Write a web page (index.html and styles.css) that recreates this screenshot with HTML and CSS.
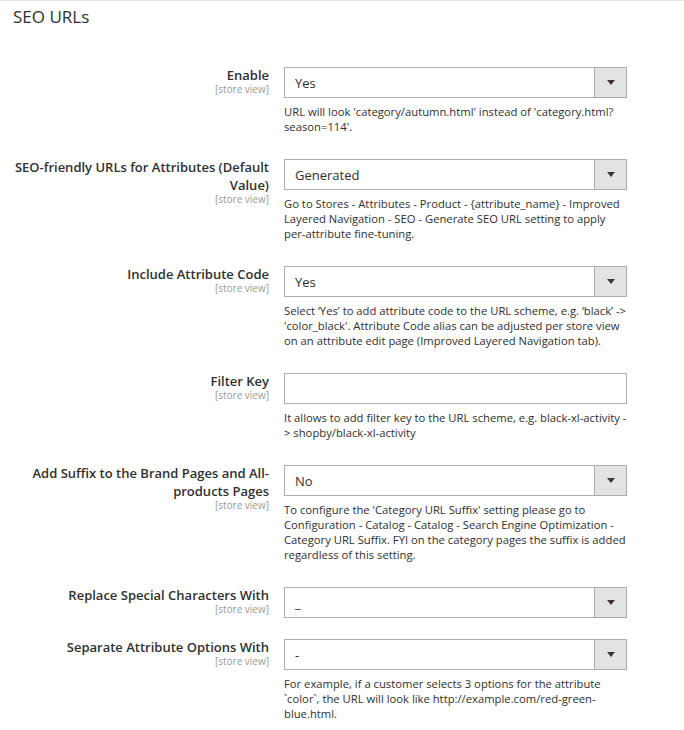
FILE: index.html
```html
<!DOCTYPE html>
<html lang="en">
<head>
<meta charset="utf-8">
<title>SEO URLs</title>
<link rel="stylesheet" href="styles.css">
</head>
<body>
<div class="section">
  <h2 class="title">SEO URLs</h2>
  <div class="rows">
    <div class="row">
      <div class="label"><span class="name">Enable</span><span class="scope">[store view]</span></div>
      <div class="control">
        <div class="select"><span class="value">Yes</span><span class="btn"><i class="arrow"></i></span></div>
        <p class="note">URL will look 'category/autumn.html' instead of 'category.html?<wbr>season=114'.</p>
      </div>
    </div>
    <div class="row">
      <div class="label"><span class="name">SEO-friendly URLs for Attributes (Default Value)</span><span class="scope">[store view]</span></div>
      <div class="control">
        <div class="select"><span class="value">Generated</span><span class="btn"><i class="arrow"></i></span></div>
        <p class="note">Go to Stores - Attributes - Product - {attribute_name} - Improved Layered Navigation - SEO - Generate SEO URL setting to apply per-attribute fine-tuning.</p>
      </div>
    </div>
    <div class="row">
      <div class="label"><span class="name">Include Attribute Code</span><span class="scope">[store view]</span></div>
      <div class="control">
        <div class="select"><span class="value">Yes</span><span class="btn"><i class="arrow"></i></span></div>
        <p class="note">Select ‘Yes’ to add attribute code to the URL scheme, e.g. ‘black’ -&gt; 'color_black'. Attribute Code alias can be adjusted per store view on an attribute edit page (Improved Layered Navigation tab).</p>
      </div>
    </div>
    <div class="row">
      <div class="label"><span class="name">Filter Key</span><span class="scope">[store view]</span></div>
      <div class="control">
        <div class="input"></div>
        <p class="note">It allows to add filter key to the URL scheme, e.g. black-xl-activity -&gt; shopby/black-xl-activity</p>
      </div>
    </div>
    <div class="row">
      <div class="label"><span class="name">Add Suffix to the Brand Pages and All-products Pages</span><span class="scope">[store view]</span></div>
      <div class="control">
        <div class="select"><span class="value">No</span><span class="btn"><i class="arrow"></i></span></div>
        <p class="note">To configure the 'Category URL Suffix' setting please go to Configuration - Catalog - Catalog - Search Engine Optimization - Category URL Suffix. FYI on the category pages the suffix is added regardless of this setting.</p>
      </div>
    </div>
    <div class="row row-plain">
      <div class="label"><span class="name">Replace Special Characters With</span><span class="scope">[store view]</span></div>
      <div class="control">
        <div class="select"><span class="value">_</span><span class="btn"><i class="arrow"></i></span></div>
      </div>
    </div>
    <div class="row">
      <div class="label"><span class="name">Separate Attribute Options With</span><span class="scope">[store view]</span></div>
      <div class="control">
        <div class="select"><span class="value">-</span><span class="btn"><i class="arrow"></i></span></div>
        <p class="note">For example, if a customer selects 3 options for the attribute `color`, the URL will look like http://example.com/red-green-blue.html.</p>
      </div>
    </div>
  </div>
</div>
</body>
</html>
```
FILE: styles.css
```css
body {
  margin: 0;
  font-family: "Open Sans", "Liberation Sans", sans-serif;
  color: #303030;
  background: #fff;
}

.section {
  border-top: 1px solid #e3e3e3;
}

.title {
  margin: 0;
  padding: 4px 0 0 13px;
  font-size: 17px;
  font-weight: 400;
  line-height: 24px;
  color: #303030;
}

.rows {
  display: flex;
  flex-direction: column;
  gap: 25px;
  padding-left: 13px;
  margin-top: 38px;
}

.row {
  display: grid;
  grid-template-columns: 256px 343px;
  column-gap: 15px;
  align-items: start;
}

.row-plain {
  margin-bottom: -4px;
}

.label {
  text-align: right;
  margin-top: -1px;
}

.name {
  display: block;
  font-size: 13px;
  font-weight: 600;
  line-height: 18px;
  color: #303030;
}

.scope {
  display: block;
  font-size: 10px;
  line-height: 11px;
  color: #999;
}

.select,
.input {
  height: 31px;
  box-sizing: border-box;
  border: 1px solid #adadad;
  background: #fff;
  display: flex;
  align-items: center;
}

.value {
  flex: 1;
  padding-left: 10px;
  font-size: 13px;
  color: #303030;
}

.btn {
  width: 32px;
  box-sizing: border-box;
  align-self: stretch;
  background: #e3e3e3;
  border-left: 1px solid #adadad;
  display: flex;
  align-items: center;
  justify-content: center;
}

.arrow {
  width: 0;
  height: 0;
  border-left: 4px solid transparent;
  border-right: 4px solid transparent;
  border-top: 5px solid #41362f;
}

.note {
  margin: 6px 0 0;
  font-size: 11.25px;
  line-height: 15px;
  color: #303030;
}
```
